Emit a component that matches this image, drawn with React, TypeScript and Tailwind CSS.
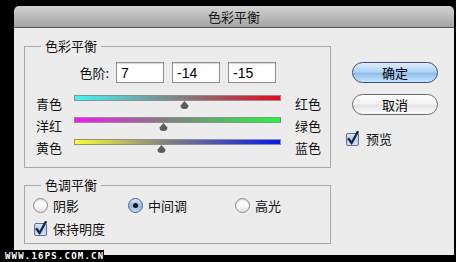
import React from "react";

const font = "font-['Noto_Sans_CJK_SC','Noto_Sans',sans-serif]";

function Thumb({ value }: { value: number }) {
  const pct = ((value + 100) / 200) * 100;
  return (
    <svg
      width="9"
      height="8"
      viewBox="0 0 9 8"
      className="absolute top-[6px]"
      style={{ left: `calc(${pct}% - 4.5px)` }}
    >
      <path d="M4.5 0 L8.2 4.2 Q9 8 4.5 8 Q0 8 0.8 4.2 Z" fill="#5c5c5c" />
    </svg>
  );
}

function Slider({
  left,
  right,
  gradient,
  value,
}: {
  left: string;
  right: string;
  gradient: string;
  value: number;
}) {
  return (
    <div className="flex items-center h-[14px] pl-[11px]">
      <span className="w-[38px] text-[13px] leading-[14px] text-[#111] mt-[4px]">{left}</span>
      <div className="relative w-[207px] h-[14px]">
        <div
          className="h-[6px] w-full border border-[#8f8f8f]"
          style={{ background: gradient }}
        />
        <Thumb value={value} />
      </div>
      <span className="ml-[14px] text-[13px] leading-[14px] text-[#111] mt-[4px]">{right}</span>
    </div>
  );
}

function Check() {
  return (
    <svg width="14" height="15" viewBox="0 0 14 15" className="shrink-0">
      <defs>
        <linearGradient id="cb" x1="0" y1="0" x2="0" y2="1">
          <stop offset="0" stopColor="#dbe8f6" />
          <stop offset="0.5" stopColor="#b3cdea" />
          <stop offset="1" stopColor="#d6e6f7" />
        </linearGradient>
      </defs>
      <rect x="0.5" y="2.5" width="12" height="12" rx="1.5" fill="url(#cb)" stroke="#5d6f8e" />
      <path d="M2.8 8.2 L5.6 12 L11.6 1.2" fill="none" stroke="#172544" strokeWidth="2.3" strokeLinecap="square" />
    </svg>
  );
}

function Radio({ on }: { on?: boolean }) {
  if (on)
    return (
      <div className="w-[15px] h-[15px] rounded-full border border-[#4a6188] bg-[linear-gradient(to_bottom,#d7e8f8,#8ab8e6_55%,#c4def6)] flex items-center justify-center shrink-0">
        <div className="w-[5px] h-[5px] rounded-full bg-[#111]" />
      </div>
    );
  return (
    <div className="w-[15px] h-[15px] rounded-full border border-[#8e8e8e] bg-[linear-gradient(to_bottom,#f4f4f4,#ffffff_40%,#e2e2e2)] shadow-[inset_0_1px_1px_rgba(0,0,0,0.15)] shrink-0" />
  );
}

function Num({ v }: { v: string }) {
  return (
    <div className="w-[48px] h-[21px] border border-[#8e8e8e] bg-white shadow-[inset_0_1px_1px_rgba(0,0,0,0.18)] pl-[4px] flex items-center text-[14px] leading-[16px] text-black font-['Liberation_Sans',sans-serif]">
      {v}
    </div>
  );
}

export default function App() {
  return (
    <div className={`relative w-[456px] h-[262px] bg-black pl-[14px] pt-[6px] ${font}`}>
      <div className="w-[440px] h-[249px] flex flex-col rounded-t-[5px] overflow-hidden">
        <div className="h-[22px] shrink-0 border-b border-[#545454] bg-[linear-gradient(to_bottom,#d2d2d2,#a4a4a4)] flex items-center justify-center text-[13px] leading-[16px] text-[#161616]">
          色彩平衡
        </div>
        <div className="flex-1 bg-[#ececec] flex pl-[10px] pt-[18px]">
          <div className="w-[307px] flex flex-col gap-[17px]">
            <div className="relative h-[122px] border border-[#a9a9a9] pt-[15px]">
              <span className="absolute left-[16px] top-[-9px] px-[4px] bg-[#ececec] text-[13px] leading-[16px] text-[#111]">
                色彩平衡
              </span>
              <div className="flex items-center h-[21px]">
                <span className="w-[84px] mr-[7px] text-right text-[13px] leading-[16px] text-[#111]">
                  色阶:
                </span>
                <div className="flex gap-[8px]">
                  <Num v="7" />
                  <Num v="-14" />
                  <Num v="-15" />
                </div>
              </div>
              <div className="mt-[12px] flex flex-col gap-[8px]">
                <Slider
                  left="青色"
                  right="红色"
                  value={7}
                  gradient="linear-gradient(to right,#35fcfc,#7f7f7f 52%,#f7001c)"
                />
                <Slider
                  left="洋红"
                  right="绿色"
                  value={-14}
                  gradient="linear-gradient(to right,#ff10ff,#808080 45%,#18ff3a)"
                />
                <Slider
                  left="黄色"
                  right="蓝色"
                  value={-15}
                  gradient="linear-gradient(to right,#ffff20,#808080 45%,#0418ff)"
                />
              </div>
            </div>
            <div className="relative h-[59px] border border-[#a9a9a9] pt-[12px]">
              <span className="absolute left-[16px] top-[-9px] px-[4px] bg-[#ececec] text-[13px] leading-[16px] text-[#111]">
                色调平衡
              </span>
              <div className="flex items-center h-[15px] pl-[8px] text-[13px] leading-[16px] text-[#111]">
                <div className="w-[95px] flex items-center gap-[5px]">
                  <Radio />
                  <span>阴影</span>
                </div>
                <div className="w-[107px] flex items-center gap-[5px]">
                  <Radio on />
                  <span>中间调</span>
                </div>
                <div className="flex items-center gap-[5px]">
                  <Radio />
                  <span>高光</span>
                </div>
              </div>
              <div className="mt-[6px] flex items-center gap-[5px] pl-[9px] text-[13px] leading-[16px] text-[#111]">
                <Check />
                <span className="mt-[2px]">保持明度</span>
              </div>
            </div>
          </div>
          <div className="flex flex-col pt-[16px]">
            <div className="ml-[21px] w-[86px] h-[21px] rounded-full border border-[#3d4f75] bg-[linear-gradient(to_bottom,#dcecfc,#b3d5f6_45%,#8dbfee_55%,#c6e4fe)] flex items-center justify-center text-[13px] leading-[16px] text-black">
              确定
            </div>
            <div className="ml-[21px] mt-[11px] w-[86px] h-[21px] rounded-full border border-[#6c6c6c] bg-[linear-gradient(to_bottom,#ffffff,#f3f3f3_45%,#e4e4e4_55%,#fbfbfb)] flex items-center justify-center text-[13px] leading-[16px] text-black">
              取消
            </div>
            <div className="ml-[15px] mt-[14px] flex items-center gap-[6px] text-[13px] leading-[16px] text-[#111]">
              <Check />
              <span className="mt-[2px]">预览</span>
            </div>
          </div>
        </div>
      </div>
      <div className="absolute left-0 top-[250px] w-[104px] h-[12px] bg-black pl-[5px] flex items-center text-[9px] leading-[10px] font-bold tracking-[1.2px] text-white font-['DejaVu_Sans_Mono',monospace]">
        WWW.16PS.COM.CN
      </div>
    </div>
  );
}
